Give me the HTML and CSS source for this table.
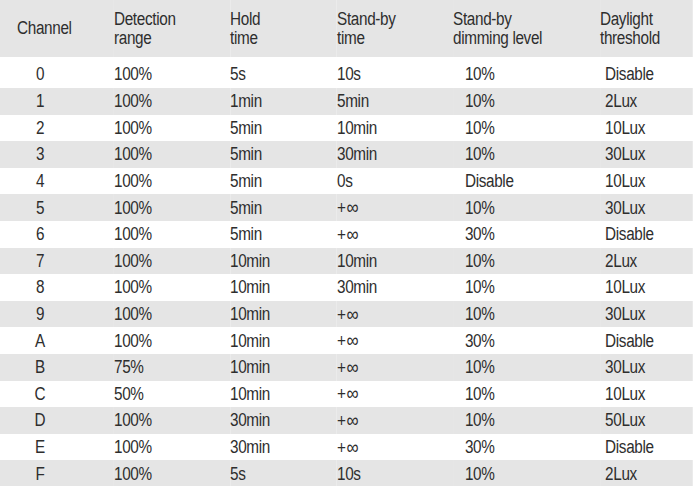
FILE: index.html
```html
<!DOCTYPE html>
<html>
<head>
<meta charset="utf-8">
<link rel="stylesheet" href="styles.css">
</head>
<body>
<div class="frame">
<table class="spec">
  <colgroup>
    <col class="c1"><col class="c2"><col class="c3"><col class="c4"><col class="c5"><col class="c6">
  </colgroup>
  <thead>
    <tr>
      <th class="ch">Channel</th>
      <th>Detection<br>range</th>
      <th>Hold<br>time</th>
      <th>Stand-by<br>time</th>
      <th>Stand-by<br>dimming level</th>
      <th>Daylight<br>threshold</th>
    </tr>
  </thead>
  <tbody>
    <tr class="first"><td class="ch">0</td><td>100%</td><td>5s</td><td>10s</td><td class="dim">10%</td><td class="day">Disable</td></tr>
    <tr><td class="ch">1</td><td>100%</td><td>1min</td><td>5min</td><td class="dim">10%</td><td class="day">2Lux</td></tr>
    <tr><td class="ch">2</td><td>100%</td><td>5min</td><td>10min</td><td class="dim">10%</td><td class="day">10Lux</td></tr>
    <tr><td class="ch">3</td><td>100%</td><td>5min</td><td>30min</td><td class="dim">10%</td><td class="day">30Lux</td></tr>
    <tr><td class="ch">4</td><td>100%</td><td>5min</td><td>0s</td><td class="dim">Disable</td><td class="day">10Lux</td></tr>
    <tr><td class="ch">5</td><td>100%</td><td>5min</td><td>+<span class="inf">∞</span></td><td class="dim">10%</td><td class="day">30Lux</td></tr>
    <tr><td class="ch">6</td><td>100%</td><td>5min</td><td>+<span class="inf">∞</span></td><td class="dim">30%</td><td class="day">Disable</td></tr>
    <tr><td class="ch">7</td><td>100%</td><td>10min</td><td>10min</td><td class="dim">10%</td><td class="day">2Lux</td></tr>
    <tr><td class="ch">8</td><td>100%</td><td>10min</td><td>30min</td><td class="dim">10%</td><td class="day">10Lux</td></tr>
    <tr><td class="ch">9</td><td>100%</td><td>10min</td><td>+<span class="inf">∞</span></td><td class="dim">10%</td><td class="day">30Lux</td></tr>
    <tr><td class="ch">A</td><td>100%</td><td>10min</td><td>+<span class="inf">∞</span></td><td class="dim">30%</td><td class="day">Disable</td></tr>
    <tr><td class="ch">B</td><td>75%</td><td>10min</td><td>+<span class="inf">∞</span></td><td class="dim">10%</td><td class="day">30Lux</td></tr>
    <tr><td class="ch">C</td><td>50%</td><td>10min</td><td>+<span class="inf">∞</span></td><td class="dim">10%</td><td class="day">10Lux</td></tr>
    <tr><td class="ch">D</td><td>100%</td><td>30min</td><td>+<span class="inf">∞</span></td><td class="dim">10%</td><td class="day">50Lux</td></tr>
    <tr><td class="ch">E</td><td>100%</td><td>30min</td><td>+<span class="inf">∞</span></td><td class="dim">30%</td><td class="day">Disable</td></tr>
    <tr><td class="ch">F</td><td>100%</td><td>5s</td><td>10s</td><td class="dim">10%</td><td class="day">2Lux</td></tr>
  </tbody>
</table>
</div>
</body>
</html>
```
FILE: styles.css
```css
html, body {
  margin: 0;
  padding: 0;
  background: #ffffff;
}
body {
  width: 693px;
  height: 486px;
  overflow: hidden;
  font-family: "Liberation Sans", Arial, sans-serif;
  color: #2e2e2e;
}
.frame {
  width: 693px;
  height: 486px;
  overflow: hidden;
}
/* The source uses a condensed grotesque; emulate it by laying the
   table out 1/0.85 wider and compressing it horizontally. */
.spec {
  width: 815px;
  border-collapse: collapse;
  border-spacing: 0;
  table-layout: fixed;
  font-size: 18px;
  letter-spacing: -0.4px;
  transform: scaleX(0.85);
  transform-origin: 0 0;
}
.c1 { width: 134.1px; }
.c2 { width: 136.5px; }
.c3 { width: 125.9px; }
.c4 { width: 136.5px; }
.c5 { width: 172.9px; }
.c6 { width: 109.1px; }

.spec th {
  background: #e5e5e5;
  height: 57px;
  padding: 0;
  text-align: left;
  font-weight: normal;
  line-height: 19px;
  vertical-align: middle;
}
.spec th.ch {
  padding-left: 20px;
}
.spec td {
  height: 26.6px;
  padding: 0;
  line-height: 18px;
  vertical-align: middle;
  text-align: left;
  white-space: nowrap;
}
.spec tr.first td {
  height: 29px;
  padding-top: 2px;
}
.spec tbody tr:nth-child(even) td {
  background: #e5e5e5;
}
.spec td.ch {
  text-align: center;
  padding-right: 40px;
}
.spec td.dim {
  padding-left: 14px;
}
.spec td.day {
  padding-left: 6px;
}
.inf {
  font-size: 20px;
  margin-left: 1px;
}
```
